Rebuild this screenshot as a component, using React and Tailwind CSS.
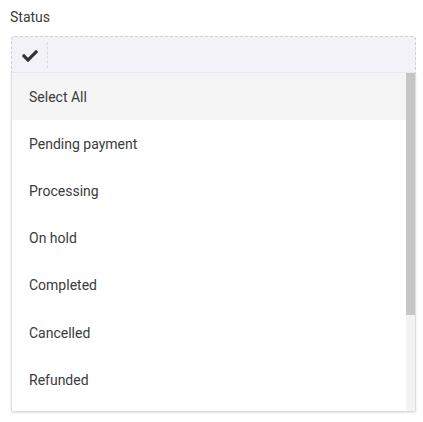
const statuses = [
  'Select All',
  'Pending payment',
  'Processing',
  'On hold',
  'Completed',
  'Cancelled',
  'Refunded',
]

function CheckIcon() {
  return (
    <svg viewBox="0 64 512 384" className="w-[16px] h-[12px] fill-[#333]">
      <path d="M173.898 439.404l-166.4-166.4c-9.997-9.997-9.997-26.206 0-36.204l36.203-36.204c9.997-9.998 26.207-9.998 36.204 0L192 312.69 432.095 72.596c9.997-9.997 26.207-9.997 36.204 0l36.203 36.204c9.997 9.997 9.997 26.206 0 36.204l-294.4 294.401c-9.998 9.997-26.207 9.997-36.204-.001z" />
    </svg>
  )
}

export default function App() {
  const hover = 'Select All'

  return (
    <div className="bg-white min-h-[422px] pt-[7px] pl-[11px] pr-[7px] font-['Roboto',sans-serif] text-[14px] text-[#3b3b3b]">
      <label className="block h-[20px] leading-[20px] mb-[9px] -ml-[1px]">Status</label>

      {/* select header */}
      <div className="h-[37px] flex items-center bg-[#f3f2f8] border border-dashed border-[#cfcfd4] border-b-0 rounded-t-[4px] shadow-[inset_0_-1px_0_#e9e8ef]">
        <div className="w-[35px] flex justify-center pl-[1px] pt-[1px]">
          <CheckIcon />
        </div>
        <div className="h-[26px] border-l border-dashed border-[#dcdce0]" />
      </div>

      {/* options */}
      <div className="h-[339px] flex border border-t-0 border-[#dedede] shadow-[0_1px_2px_rgba(0,0,0,0.12)] rounded-b-[2px] overflow-hidden">
        <div className="flex-1">
          {statuses.map((s) => (
            <div
              key={s}
              className={`h-[47.2px] flex items-center pl-[17px] pt-[1px] ${hover === s ? 'bg-[#f5f5f5]' : 'bg-white'}`}
            >
              {s}
            </div>
          ))}
        </div>
        <div className="w-[9px] bg-[#f3f3f3]">
          <div className="h-[242px] bg-[#c6c6c6]" />
        </div>
      </div>
    </div>
  )
}
